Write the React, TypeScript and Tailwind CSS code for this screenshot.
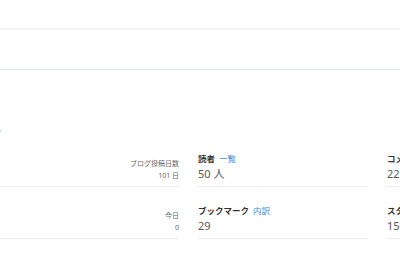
import React from 'react';

// ダッシュボードの統計欄（切り抜き）
const font = { fontFamily: '"Noto Sans", "Noto Sans CJK JP", sans-serif' };

const LeftStat = ({ label, value }: { label: string; value: string }) => (
  <div className="h-[36px] flex flex-col justify-end items-end pb-[4px] border-b border-[#ececec] text-[#666]">
    <div className="text-[7px] leading-[12px]">{label}</div>
    <div className="text-[7px] leading-[12px]">{value}</div>
  </div>
);

const Stat = ({ label, link, value }: { label: string; link?: string; value: string }) => (
  <div className="h-[36px] flex flex-col justify-end pb-[4px] border-b border-[#ececec]">
    <div className="text-[8.5px] leading-[14px] whitespace-nowrap">
      <span className="font-bold text-[#333]">{label}</span>
      {link && <span className="ml-[4px] text-[#3d8be0]">{link}</span>}
    </div>
    <div className="text-[11px] leading-[16px] text-[#555] whitespace-nowrap">{value}</div>
  </div>
);

export default function App() {
  return (
    <div className="w-[400px] h-[260px] overflow-hidden bg-white relative" style={font}>
      <div className="h-[28px]" />
      <div className="h-[2px] bg-[#f3f3f3]" />
      <div className="h-[40px] border-b border-[#e2e7ec]" />
      <div className="absolute left-0 top-[130px] w-[1px] h-[2px] bg-[#c4d9f5]" />
      <div className="mt-[81px] grid grid-cols-[179px_170px_170px] gap-x-[19px] gap-y-[16px]">
        <LeftStat label="ブログ投稿日数" value="101 日" />
        <Stat label="読者" link="一覧" value="50 人" />
        <Stat label="コメント" value="22 件" />
        <LeftStat label="今日" value="0" />
        <Stat label="ブックマーク" link="内訳" value="29" />
        <Stat label="スター" value="150" />
      </div>
    </div>
  );
}
